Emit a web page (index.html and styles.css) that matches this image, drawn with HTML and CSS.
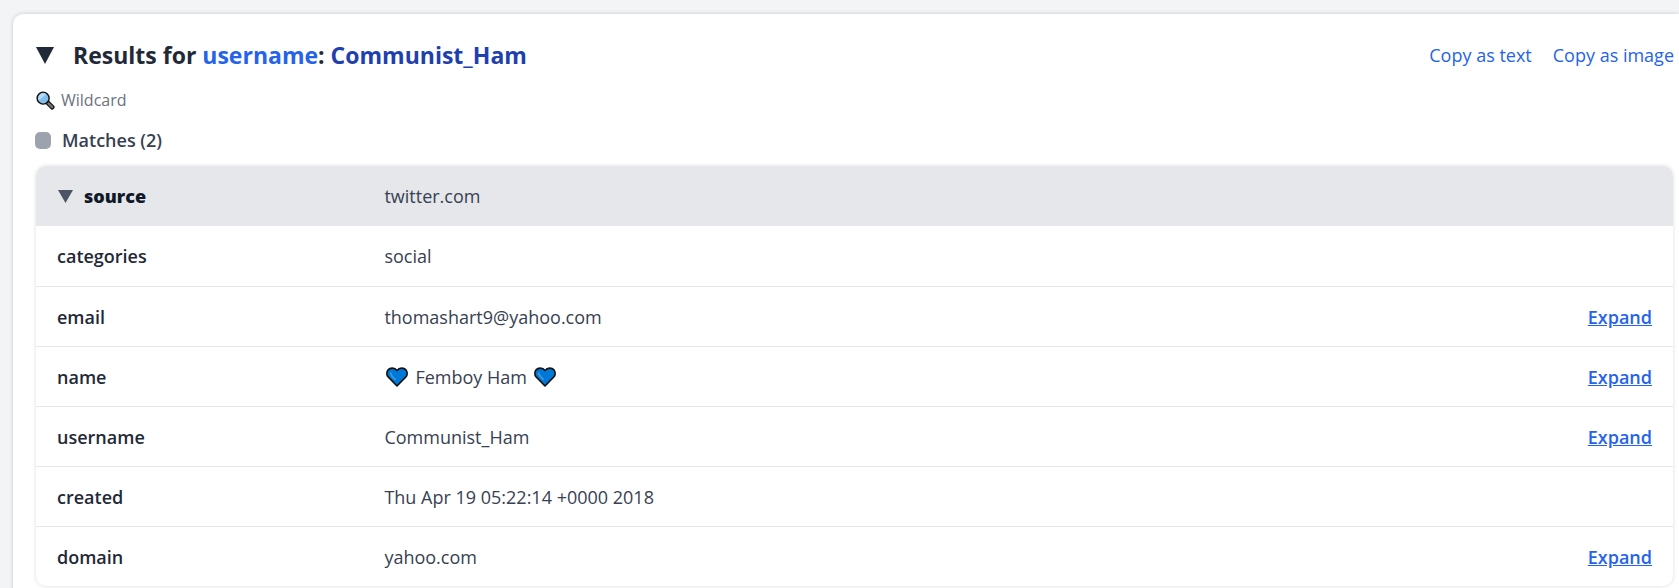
FILE: index.html
```html
<!DOCTYPE html>
<html lang="en">
<head>
<meta charset="utf-8">
<title>Search results</title>
<link rel="stylesheet" href="styles.css">
</head>
<body>
<svg class="defs" aria-hidden="true">
  <symbol id="heart" viewBox="0 0 22 20">
    <path d="M11 19 1.900 9.600C.4 7.800.6 4.600 2 2.900 4.100.5 8.600.3 11 3.400 13.400.3 17.900.5 20 2.900c1.400 1.700 1.600 4.900.1 6.700z" fill="#0078d7" stroke="#111" stroke-width="1.600" stroke-linejoin="round"/>
    <path d="M4.600 6c.4 2.200 1.800 4.200 4.600 6.200" fill="none" stroke="#3a96dd" stroke-width="1.700" stroke-linecap="round"/>
  </symbol>
</svg>
<main class="card">
  <header class="card-header">
    <h1 class="title">
      <button class="toggle" type="button" aria-label="Collapse results"><svg class="tri" viewBox="0 0 18 17"><path d="M0 0h18L9 17z" fill="currentColor"/></svg></button>
      <span>Results for <span class="field">username</span>: <span class="value">Communist_Ham</span></span>
    </h1>
    <nav class="actions"><a href="#text">Copy as text</a><a href="#image">Copy as image</a></nav>
  </header>
  <p class="mode">
    <svg class="lens" viewBox="0 0 20 20" aria-hidden="true">
      <path d="M11.500 11.500 17 17" stroke="#111" stroke-width="5" stroke-linecap="round"/>
      <path d="M13 13 17 17" stroke="#767676" stroke-width="2.400" stroke-linecap="round"/>
      <circle cx="7.500" cy="7.500" r="6.300" fill="#83beec" stroke="#111" stroke-width="1.500"/>
      <path d="M3 10A5.300 5.300 0 0 1 10.800 3.400z" fill="#b3dbf7"/>
    </svg>
    <span>Wildcard</span>
  </p>
  <h2 class="matches"><span class="chip"></span>Matches (2)</h2>
  <div class="panel">
    <table class="record">
      <colgroup><col class="col-key"><col><col class="col-action"></colgroup>
      <thead>
        <tr><th scope="row"><span class="source"><button class="toggle" type="button" aria-label="Collapse record"><svg class="tri-small" viewBox="0 0 15 13"><path d="M0 0h15L7.500 13z" fill="currentColor"/></svg></button>source</span></th><td>twitter.com</td><td></td></tr>
      </thead>
      <tbody>
        <tr><th scope="row">categories</th><td>social</td><td></td></tr>
        <tr><th scope="row">email</th><td>thomashart9@yahoo.com</td><td class="action"><a href="#email">Expand</a></td></tr>
        <tr><th scope="row">name</th><td><span class="name"><svg class="heart" role="img" aria-label="blue heart"><use href="#heart"/></svg>Femboy Ham<svg class="heart" role="img" aria-label="blue heart"><use href="#heart"/></svg></span></td><td class="action"><a href="#name">Expand</a></td></tr>
        <tr><th scope="row">username</th><td>Communist_Ham</td><td class="action"><a href="#username">Expand</a></td></tr>
        <tr><th scope="row">created</th><td>Thu Apr 19 05:22:14 +0000 2018</td><td></td></tr>
        <tr><th scope="row">domain</th><td>yahoo.com</td><td class="action"><a href="#domain">Expand</a></td></tr>
      </tbody>
    </table>
  </div>
</main>
</body>
</html>
```
FILE: styles.css
```css
* { box-sizing: border-box; }

body {
  margin: 0;
  padding: 14px 0 0 13px;
  background: #f3f4f6;
  color: #374151;
  font: 18px/28px "Segoe UI", "Open Sans", "Noto Sans", sans-serif;
  overflow: hidden;
}

.defs { display: none; }

.card {
  padding: 22px 5px 22px 22px;
  background: #fff;
  border-radius: 10px 0 0 0;
  box-shadow: 0 0 4px rgba(0, 0, 0, 0.18);
}

.card-header {
  display: flex;
  justify-content: space-between;
  align-items: center;
}

.title {
  display: flex;
  align-items: center;
  gap: 19px;
  margin: 0;
  color: #1f2937;
  font-size: 23px;
  line-height: 38px;
  font-weight: 700;
}

.field { color: #2563eb; }
.value { color: #1e40af; }

.toggle {
  display: flex;
  padding: 0 0 0 1px;
  border: 0;
  background: none;
  color: inherit;
  cursor: pointer;
}

.tri { width: 18px; height: 17px; }
.tri-small { width: 15px; height: 13px; }

.actions { display: flex; gap: 21px; }
a { color: #2563eb; }
.actions a { text-decoration: none; }

.mode {
  display: flex;
  align-items: center;
  gap: 6px;
  margin: 12px 0 0;
  padding-left: 1px;
  color: #6b7280;
  font-size: 16px;
}

.lens { width: 19px; height: 19px; }

.matches {
  display: flex;
  align-items: center;
  gap: 11px;
  margin: 12px 0;
  color: #374151;
  font-size: 18px;
  font-weight: 600;
}

.chip {
  width: 16px;
  height: 17px;
  border-radius: 5px;
  background: #9ca3af;
}

.panel {
  margin: 0 1px;
  border-radius: 10px;
  box-shadow: 0 0 4px rgba(0, 0, 0, 0.14);
  overflow: hidden;
}

.record {
  width: 100%;
  table-layout: fixed;
  border-collapse: separate;
  border-spacing: 0;
}

.col-key { width: 20%; }
.col-action { width: 20%; }

th, td {
  height: 60px;
  padding: 0 21px;
  text-align: left;
  vertical-align: middle;
}

th { color: #1f2937; font-weight: 600; }
thead { background: #e5e7eb; }
thead th { color: #111827; font-weight: 800; }
tbody tr + tr > * { border-top: 1px solid #e5e7eb; }

.source, .name { display: flex; align-items: center; }
.source { gap: 11px; }
.source .toggle { color: #4b5563; }
.name { gap: 7px; padding-left: 2px; }
.heart { width: 22px; height: 20px; }

.action { text-align: right; }
.action a { font-weight: 600; }
```
